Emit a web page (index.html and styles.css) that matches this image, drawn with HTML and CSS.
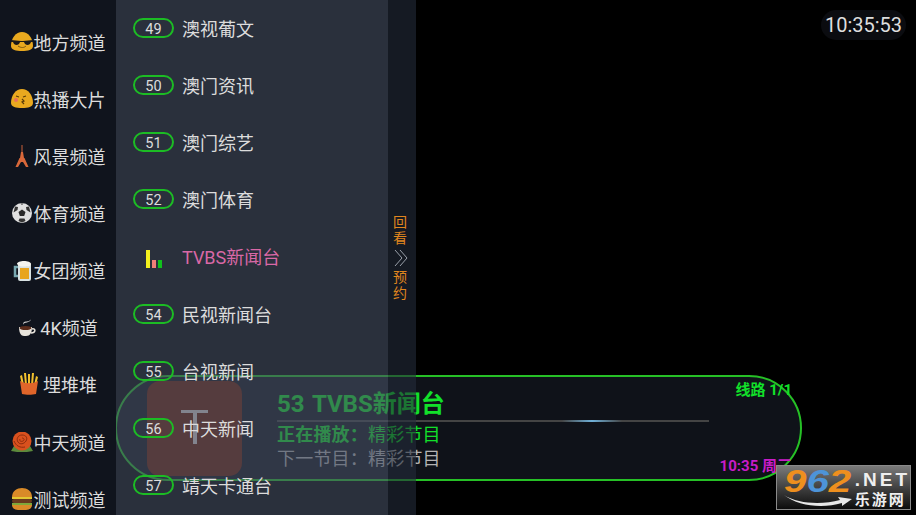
FILE: index.html
```html
<!DOCTYPE html>
<html lang="zh-CN">
<head>
  <meta charset="utf-8">
  <title>TV</title>
  <link rel="stylesheet" href="styles.css">
</head>
<body>
  <div class="tv">
    <nav class="side">
      <div class="cat">
        <svg width="22" height="19" viewBox="0 0 22 19"><path d="M0 14C0 6 5 0 11 0s11 6 11 14c0 4-5 5-11 5S0 18 0 14z" fill="#e9a91f"/><path d="M0 8l10 1 2 0 10-1v2l-2 0c-1 4-6 4-7 0h-4c-1 4-6 4-7 0l-2 0z" fill="#1b1b1b"/><path d="M7 14c3 2 6 2 8 0" stroke="#7a5510" stroke-width="1" fill="none"/></svg>
        <span>地方频道</span>
      </div>
      <div class="cat">
        <svg width="22" height="19" viewBox="0 0 22 19"><path d="M0 14C0 6 5 0 11 0s11 6 11 14c0 4-5 5-11 5S0 18 0 14z" fill="#e9a91f"/><path d="M5 7l3 1M12 8l3-1" stroke="#5c3d08" stroke-width="1.2"/><circle cx="5" cy="11" r="2" fill="#e8705a"/><path d="M11 10l2 2-2 1 2 2" stroke="#5c3d08" stroke-width="1.2" fill="none"/></svg>
        <span>热播大片</span>
      </div>
      <div class="cat">
        <svg width="22" height="22" viewBox="-3 0 22 22"><path d="M8 0v7" stroke="#c9603a" stroke-width="1" fill="none"/><path d="M7 7h2l1 6H6zM5.500 13h5l4 9h-2.500l-3-5H7l-3 5H1.500z" fill="#d9683a"/></svg>
        <span>风景频道</span>
      </div>
      <div class="cat">
        <svg width="22" height="20" viewBox="-1 0 22 20"><circle cx="10" cy="10" r="10" fill="#e0e0e0"/><path d="M10 6.500l3.500 2.500-1.300 4h-4.400L6.500 9z" fill="#2a2a2a"/><path d="M3 3.500l3 .5-.5 3-4 2.500zM17 3.500l-3 .5.500 3 4 2.500zM6.500 18l1-2.500h5l1 2.500-3.500 1.500zM8.500 .5h3L10 2z" fill="#333"/></svg>
        <span>体育频道</span>
      </div>
      <div class="cat">
        <svg width="22" height="21" viewBox="-2 0 22 21"><rect x="5" y="3" width="13" height="18" rx="2" fill="#d9e2e2"/><rect x="7" y="8" width="9" height="11" fill="#e8a51e"/><path d="M5 7H2v9h3" stroke="#78a8b0" stroke-width="2.500" fill="none"/><path d="M4 4c0-4 14-4 14 0 0 2-3 3-4 2-2 1-8 1-10-2z" fill="#f4f4ee"/></svg>
        <span>女团频道</span>
      </div>
      <div class="cat">
        <svg width="18" height="18" viewBox="0 0 18 18"><path d="M1 9h13c0 6-2 9-6 9H6C3 18 1 15 1 9z" fill="#e8e4dc"/><ellipse cx="7.500" cy="10" rx="6" ry="2" fill="#5a2c1c"/><path d="M14 11c4-1 4 4-1 4" stroke="#e8e4dc" stroke-width="1.500" fill="none"/><path d="M5 7c0-3 8-2 8-6-1 3-5 2-7 3-1 1-1 2-1 3z" fill="#cfcfcf"/></svg>
        <span class="num">4K频道</span>
      </div>
      <div class="cat">
        <svg width="20" height="22" viewBox="0 0 20 22"><path d="M1 3l2 9h2L3 2zM5 0l1 12h2L7 0zM9 1v11h2V1zM13 0l-1 12h2l1-12zM17 3l-2 9h2l2-8z" fill="#f2c12e"/><path d="M1 8c5 3 13 3 18 0l-2 13c-4 1-10 1-14 0z" fill="#e0652a"/></svg>
        <span class="num">埋堆堆</span>
      </div>
      <div class="cat">
        <svg width="22" height="20" viewBox="0 0 22 20"><path d="M0 19l3-5 16 0 3 5-6 1H6z" fill="#5c8a3c"/><circle cx="11" cy="9" r="9.500" fill="#d9511e"/><path d="M11 3c4 0 6 3 4 6s-6 4-8 1 0-7 4-7zM11 6c2 0 3 2 1 3s-4 0-3-2" stroke="#8e2c0e" stroke-width="1" fill="none"/><path d="M3 9c2 5 6 7 11 6" stroke="#8e2c0e" stroke-width="1" fill="none"/></svg>
        <span>中天频道</span>
      </div>
      <div class="cat">
        <svg width="22" height="22" viewBox="-1 0 22 22"><path d="M0 9C0 3 5 0 10 0s10 3 10 9z" fill="#d98a28"/><rect y="9" width="20" height="2" fill="#e2c832"/><rect y="11" width="20" height="4" rx="2" fill="#6a3a1e"/><rect y="15" width="20" height="2" fill="#7fa83a"/><path d="M0 17h20c0 3-3 5-6 5H6c-3 0-6-2-6-5z" fill="#d98a28"/></svg>
        <span>测试频道</span>
      </div>
    </nav>

    <section class="list">
      <div class="row"><span class="badge">49</span><span>澳视葡文</span></div>
      <div class="row"><span class="badge">50</span><span>澳门资讯</span></div>
      <div class="row"><span class="badge">51</span><span>澳门综艺</span></div>
      <div class="row"><span class="badge">52</span><span>澳门体育</span></div>
      <div class="row row-on">
        <span class="bars"><i class="b1"></i><i class="b2"></i><i class="b3"></i></span>
        <span>TVBS新闻台</span>
      </div>
      <div class="row"><span class="badge">54</span><span>民视新闻台</span></div>
      <div class="row"><span class="badge">55</span><span>台视新闻</span></div>
      <div class="row"><span class="badge">56</span><span>中天新闻</span></div>
      <div class="row"><span class="badge">57</span><span>靖天卡通台</span></div>
    </section>

    <aside class="strip">
      <span>回</span>
      <span>看</span>
      <svg width="14" height="16" viewBox="0 0 14 16"><path d="M1 0l7 8-7 8M6 0l7 8-7 8" stroke="#9aa0aa" stroke-width="1" fill="none"/></svg>
      <span>预</span>
      <span>约</span>
    </aside>

    <div class="bar">
      <div class="thumb"><i class="t-h"></i><i class="t-v"></i></div>
      <div class="info">
        <div class="title">53 TVBS新闻台</div>
        <div class="rule"><i></i></div>
        <div class="now"><b>正在播放：</b>精彩节目</div>
        <div class="next">下一节目：精彩节目</div>
      </div>
      <div class="meta">
        <span class="route">线路 1/1</span>
        <span class="stamp">10:35 周三</span>
      </div>
    </div>

    <div class="clock">10:35:53</div>

    <div class="mark">
      <div class="mark-left">
        <div class="mark-num"><span class="o">9</span><span class="bl">6</span><span class="o">2</span></div>
        <svg width="68" height="13" viewBox="0 0 68 13"><path d="M0 1c14 9 38 10 56 5l-2-3 14 2-10 7 0-3c-20 6-44 3-58-8z" fill="#e8e8e8"/></svg>
      </div>
      <div class="mark-right">
        <div class="mark-net">.NET</div>
        <div class="mark-cn">乐游网</div>
      </div>
    </div>
  </div>
</body>
</html>
```

FILE: styles.css
```css
:root {
  --green: #12e02a;
  --cjk: Roboto, "Noto Sans CJK SC", sans-serif;
}
* { box-sizing: border-box; margin: 0; padding: 0; }
body {
  background: #000;
  font-family: var(--cjk);
}
.tv {
  position: relative;
  display: flex;
  width: 916px;
  height: 515px;
  overflow: hidden;
  background: #000;
}

/* category column */
.side {
  position: relative;
  z-index: 2;
  flex: none;
  width: 116px;
  padding-top: 13px;
  background: #10141d;
}
.cat {
  display: flex;
  align-items: center;
  justify-content: center;
  gap: 1px;
  height: 57.15px;
  color: #dcdcdc;
  font-size: 18px;
}
.cat svg { flex: none; }
.cat .num { margin-left: 3px; }

/* channel column */
.list {
  position: relative;
  z-index: 2;
  flex: none;
  width: 272px;
  background: rgba(70, 80, 100, .6);
}
.row {
  display: flex;
  align-items: center;
  height: 57.2px;
  padding: 0 0 2px 17px;
  color: #dcdcdc;
  font-size: 18px;
}
.badge {
  flex: none;
  width: 41px;
  height: 20px;
  margin-right: 8px;
  border: 2px solid #1cbc24;
  border-radius: 10px;
  font-size: 14.5px;
  line-height: 19px;
  text-align: center;
}
.row-on { color: #d968a6; }
.bars {
  display: flex;
  align-items: flex-end;
  gap: 2px;
  flex: none;
  width: 49px;
  height: 18px;
  margin-top: 6px;
  padding-left: 13px;
}
.bars i { display: block; width: 4px; }
.bars .b1 { height: 18px; background: #f4f01e; }
.bars .b2 { height: 8px; background: #ef7f78; }
.bars .b3 { height: 8px; background: #10c01c; }

/* look back / reserve strip */
.strip {
  position: relative;
  z-index: 2;
  display: flex;
  flex-direction: column;
  align-items: center;
  flex: none;
  width: 28px;
  padding: 214px 4px 0 0;
  background: rgba(35, 43, 58, .6);
  color: #e0861e;
  font-size: 14px;
  line-height: 16px;
}
.strip svg { margin: 4px 0 3px 1px; }

/* now playing bar, sits under the side panels */
.bar {
  position: absolute;
  z-index: 1;
  left: 115px;
  top: 375px;
  display: flex;
  width: 687px;
  height: 106px;
  padding: 4px 8px 0 30px;
  border: 2px solid #26c026;
  border-radius: 53px;
  background: #0f1219;
}
.thumb {
  position: relative;
  flex: none;
  width: 95px;
  height: 95px;
  border-radius: 13px;
  background: #6b1e05;
}
.t-h, .t-v {
  position: absolute;
  background: #dcd2cc;
}
.t-h { left: 34px; top: 29px; width: 27px; height: 3px; }
.t-v { left: 46px; top: 29px; width: 4px; height: 34px; }
.info {
  flex: none;
  width: 432px;
  margin-left: 35px;
}
.title {
  margin-top: 10px;
  color: var(--green);
  font-size: 24px;
  font-weight: 700;
  line-height: 26px;
  word-spacing: 2px;
}
.rule {
  position: relative;
  height: 2px;
  margin-top: 3px;
  background: #444;
}
.rule i {
  position: absolute;
  left: 285px;
  top: 0;
  width: 60px;
  height: 2px;
  background: linear-gradient(90deg, #444, #6fb0d8, #444);
}
.now {
  margin-top: 1px;
  color: var(--green);
  font-size: 18px;
  line-height: 24px;
  letter-spacing: .2px;
}
.now b { font-weight: 700; }
.next {
  color: #b4b4b4;
  font-size: 18px;
  line-height: 24px;
  letter-spacing: .2px;
}
.meta {
  display: flex;
  flex: 1;
  flex-direction: column;
  align-items: flex-end;
  justify-content: space-between;
  height: 96px;
  margin-top: -1px;
  font-size: 15px;
  font-weight: 700;
  line-height: 20px;
}
.route { color: var(--green); }
.stamp { color: #c81cc8; }

/* clock */
.clock {
  position: absolute;
  top: 10px;
  right: 10px;
  width: 85px;
  height: 30px;
  border-radius: 15px;
  background: #0b0c10;
  color: #dedede;
  font-size: 20px;
  line-height: 30px;
  text-align: center;
}

/* watermark */
.mark {
  position: absolute;
  z-index: 3;
  left: 776px;
  top: 465px;
  display: flex;
  gap: 2px;
  width: 135px;
  height: 45px;
  padding: 2px 0 0 7px;
  border: 1px solid #8a8a8a;
  background: linear-gradient(180deg, #7a7a7a 0%, #3c3c3c 55%, #0c0c0c 100%);
}
.mark-left { width: 69px; }
.mark-left svg { display: block; margin-top: -1px; }
.mark-num {
  height: 27px;
  font-family: "Liberation Sans", sans-serif;
  font-size: 31px;
  font-style: italic;
  font-weight: 700;
  line-height: 27px;
  transform: scaleX(1.3);
  transform-origin: left;
}
.mark-num .o { color: #ee8f1e; }
.mark-num .bl { color: #4d94d8; }
.mark-net {
  color: #efefef;
  font-family: "Liberation Sans", sans-serif;
  font-size: 19px;
  font-weight: 700;
  line-height: 24px;
  letter-spacing: 3px;
}
.mark-cn {
  color: #efefef;
  font-size: 15px;
  font-weight: 700;
  line-height: 16px;
  letter-spacing: 2px;
}
```
